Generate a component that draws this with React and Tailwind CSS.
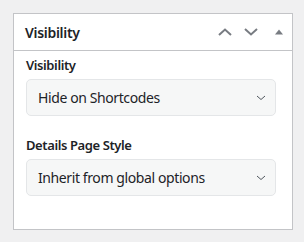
import React from 'react';

const ChevronUp = () => (
  <svg width="16" height="10" viewBox="0 0 16 10" className="block">
    <path d="M2 8 L8 2.5 L14 8" fill="none" stroke="#787c82" strokeWidth="2" />
  </svg>
);

const ChevronDown = () => (
  <svg width="16" height="10" viewBox="0 0 16 10" className="block">
    <path d="M2 2 L8 7.5 L14 2" fill="none" stroke="#787c82" strokeWidth="2" />
  </svg>
);

const Triangle = () => (
  <svg width="10" height="8" viewBox="0 0 10 8" className="block">
    <path d="M1 6.5 L5 1.5 L9 6.5 Z" fill="#787c82" />
  </svg>
);

const SmallChevron = () => (
  <svg width="10" height="6" viewBox="0 0 10 6" className="block">
    <path d="M1 1 L5 4.5 L9 1" fill="none" stroke="#50575e" strokeWidth="1" />
  </svg>
);

const Field = ({ label, value }) => (
  <div className="flex flex-col">
    <div className="text-[13px] leading-[18px] font-semibold tracking-[-0.4px] text-[#1d2327]">{label}</div>
    <div className="mt-[5px] h-[37px] w-[250px] flex items-center justify-between rounded-[5px] border border-[#e4e6e8] bg-[#f6f7f7] pl-[11px] pr-[9px]">
      <span className="text-[14px] tracking-[-0.4px] text-[#1d2327]">{value}</span>
      <SmallChevron />
    </div>
  </div>
);

export default function App() {
  return (
    <div
      className="min-h-[242px] w-[304px] bg-[#f0f0f1] pt-[13px] pl-[13px]"
      style={{ fontFamily: '"Noto Sans", "Open Sans", sans-serif' }}
    >
      <div className="w-[280px] h-[217px] border border-[#c3c4c7] bg-white">
        <div className="h-[37px] flex items-center justify-between border-b border-[#c3c4c7] pl-[11px] pr-[8px]">
          <h2 className="text-[14px] font-semibold tracking-[-0.3px] text-[#1d2327]">Visibility</h2>
          <div className="flex items-center">
            <ChevronUp />
            <div className="w-[10px]" />
            <ChevronDown />
            <div className="w-[15px]" />
            <Triangle />
          </div>
        </div>
        <div className="flex flex-col gap-[20px] px-[12px] pt-[5px]">
          <Field label="Visibility" value="Hide on Shortcodes" />
          <Field label="Details Page Style" value="Inherit from global options" />
        </div>
      </div>
    </div>
  );
}
